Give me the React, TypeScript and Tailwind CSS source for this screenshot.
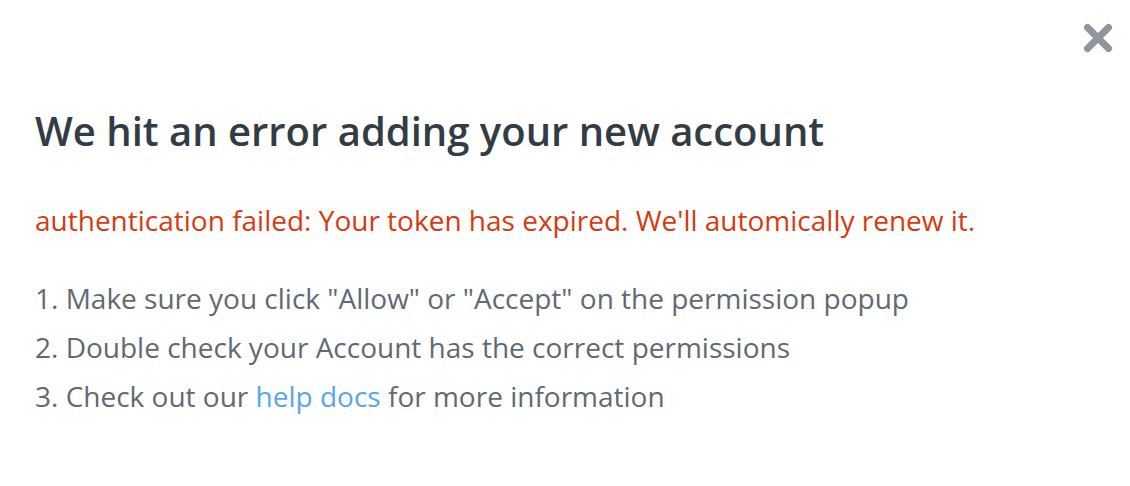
export default function App() {
  return (
    <div
      className="relative w-[1130px] h-[486px] bg-white"
      style={{ fontFamily: '"Open Sans", "Noto Sans", sans-serif' }}
    >
      <button
        type="button"
        aria-label="Close"
        className="absolute right-[16px] top-[22px] w-[32px] h-[32px] flex items-center justify-center"
      >
        <svg viewBox="0 0 32 32" width="32" height="32">
          <path
            d="M5.5 5.5 L26.5 26.5 M26.5 5.5 L5.5 26.5"
            stroke="#8d979d"
            strokeWidth="7"
            strokeLinecap="round"
          />
        </svg>
      </button>

      <div className="pl-[35px] pt-[103px]">
        <h1 className="text-[40px] leading-[56px] font-semibold text-[#323c44]">
          We hit an error adding your new account
        </h1>

        <p className="mt-[41px] text-[28px] leading-[40px] text-[#d83a10]">
          authentication failed: Your token has expired. We'll automically renew it.
        </p>

        <ol className="mt-[34px] text-[28px] leading-[49px] text-[#5f6a72]">
          <li>1. Make sure you click "Allow" or "Accept" on the permission popup</li>
          <li>2. Double check your Account has the correct permissions</li>
          <li>
            3. Check out our <a className="text-[#5aa6e8]">help docs</a> for more information
          </li>
        </ol>
      </div>
    </div>
  );
}
